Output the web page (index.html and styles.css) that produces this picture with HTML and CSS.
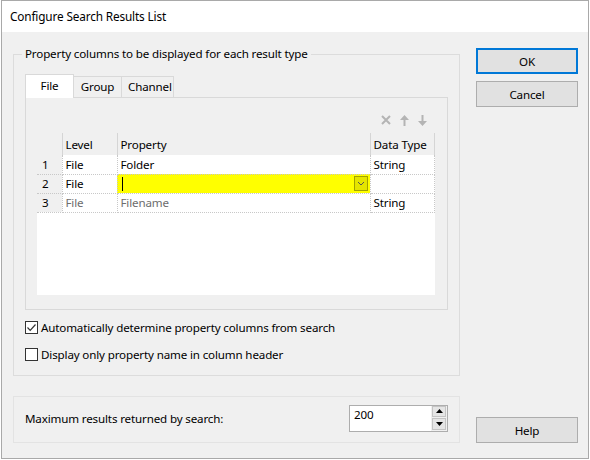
FILE: index.html
```html
<!DOCTYPE html>
<html lang="en">
<head>
  <meta charset="UTF-8">
  <title>Configure Search Results List</title>
  <link rel="stylesheet" href="styles.css">
</head>
<body>
  <div class="window">
    <div class="titlebar">Configure Search Results List</div>
    <div class="content">
      <div class="main">
        <fieldset class="group columns-group">
          <legend>Property columns to be displayed for each result type</legend>
          <div class="tabs">
            <div class="tab active">File</div>
            <div class="tab">Group</div>
            <div class="tab">Channel</div>
          </div>
          <div class="tab-page">
            <div class="grid-tools">
              <svg width="10" height="10" viewBox="0 0 10 10"><path d="M1 1L9 9M9 1L1 9" stroke="#b4b4b4" stroke-width="2"/></svg>
              <svg width="9" height="11" viewBox="0 0 9 11"><path d="M4.5 0L9 5H5.5V11H3.5V5H0Z" fill="#b4b4b4"/></svg>
              <svg width="9" height="11" viewBox="0 0 9 11"><path d="M4.5 11L9 6H5.5V0H3.5V6H0Z" fill="#b4b4b4"/></svg>
            </div>
            <div class="grid">
              <table>
                <colgroup>
                  <col class="c-num"><col class="c-level"><col class="c-prop"><col class="c-type">
                </colgroup>
                <tr>
                  <th></th><th>Level</th><th>Property</th><th>Data Type</th>
                </tr>
                <tr>
                  <td class="num">1</td><td>File</td><td>Folder</td><td>String</td>
                </tr>
                <tr>
                  <td class="num">2</td><td>File</td>
                  <td class="editing">
                    <div class="edit-cell">
                      <span class="caret"></span>
                      <span class="drop">
                        <svg width="8" height="5" viewBox="0 0 8 5"><path d="M1 1L4 4L7 1" fill="none" stroke="#555" stroke-width="1"/></svg>
                      </span>
                    </div>
                  </td>
                  <td></td>
                </tr>
                <tr class="disabled">
                  <td class="num">3</td><td>File</td><td>Filename</td><td class="plain">String</td>
                </tr>
              </table>
            </div>
          </div>
          <label class="check first">
            <span class="box">
              <svg width="11" height="11" viewBox="0 0 11 11"><path d="M1.5 5.5L4.2 8.3L9.5 2.5" fill="none" stroke="#333" stroke-width="1.2"/></svg>
            </span>
            Automatically determine property columns from search
          </label>
          <label class="check">
            <span class="box"></span>
            Display only property name in column header
          </label>
        </fieldset>

        <div class="group limit-group">
          <span>Maximum results returned by search:</span>
          <div class="spin">
            <div class="spin-value">200</div>
            <div class="spin-btns">
              <div class="spin-btn"><svg width="7" height="4" viewBox="0 0 7 4"><path d="M3.5 0L7 4H0Z" fill="#000"/></svg></div>
              <div class="spin-btn"><svg width="7" height="4" viewBox="0 0 7 4"><path d="M0 0H7L3.5 4Z" fill="#000"/></svg></div>
            </div>
          </div>
        </div>
      </div>

      <div class="side">
        <button class="btn default">OK</button>
        <button class="btn cancel">Cancel</button>
        <button class="btn help">Help</button>
      </div>
    </div>
  </div>
</body>
</html>
```

FILE: styles.css
```css
* { box-sizing: border-box; }
body { margin: 0; background: #fff; font-family: "Noto Sans", sans-serif; font-size: 11.6px; letter-spacing: -0.15px; color: #000; }

.window { width: 588px; height: 459px; margin-left: 1px; border: 1px solid #a9a9a9; background: #f0f0f0; display: flex; flex-direction: column; }
.titlebar { height: 31px; line-height: 31px; background: #fff; padding-left: 8px; font-size: 11.8px; }
.content { flex: 1; display: flex; gap: 16px; padding: 14px 10px 16px 11px; }

.main { width: 447px; display: flex; flex-direction: column; }
.group { border: 1px solid #dcdcdc; }
.columns-group { margin: 0; padding: 12px 11px 11px 11px; min-width: 0; }
.columns-group legend { padding: 0 3px; margin-left: -3px; line-height: 16px; }

.tabs { display: flex; align-items: flex-end; height: 23px; }
.tab { height: 21px; line-height: 20px; padding: 0 6px; border: 1px solid #d9d9d9; border-bottom: none; background: #f0f0f0; margin-left: -1px; text-align: center; }
.tab.active { width: 49px; height: 24px; margin-left: 0; margin-bottom: -1px; background: #fff; position: relative; z-index: 1; line-height: 21px; }
.tab:nth-child(2) { width: 49px; }
.tab:nth-child(3) { width: 53px; }

.tab-page { border: 1px solid #d9d9d9; padding: 0 12px 14px 11px; }
.grid-tools { height: 35px; display: flex; justify-content: flex-end; align-items: flex-start; gap: 9px; padding: 17px 8px 0 0; }

.grid { height: 162px; background: #fff; }
.grid table { width: 397px; border-collapse: collapse; table-layout: fixed; }
.c-num { width: 25px; }
.c-level { width: 55px; }
.c-prop { width: 253px; }
.c-type { width: 64px; }
.grid th { height: 22px; background: #f0f0f0; font-weight: normal; text-align: left; padding: 0 3px; border-left: 1px solid #d5d5d5; border-right: 1px solid #d5d5d5; white-space: nowrap; }
.grid th:first-child { border-left: none; }
.grid td { height: 19px; padding: 0 3px; border: 1px dotted #c8c8c8; border-top: none; white-space: nowrap; }
.grid td.num { background: #f0f0f0; padding-left: 5px; border-left: none; }
.grid tr.disabled td { color: #6d6d6d; }
.grid tr.disabled td.num, .grid tr.disabled td.plain { color: #000; }

.grid td.editing { background: #ffff00; padding: 0 2px 0 3px; }
.edit-cell { display: flex; align-items: center; justify-content: space-between; height: 18px; }
.caret { width: 1px; height: 14px; background: #000; margin-left: 1px; }
.drop { width: 14px; height: 15px; border: 1px solid #a3a300; background: #e5e500; display: flex; align-items: center; justify-content: center; }

.check { display: flex; align-items: center; gap: 3px; height: 20px; margin-top: 7px; }
.check.first { margin-top: 7px; }
.box { width: 13px; height: 13px; border: 1px solid #333; background: #fff; display: flex; align-items: center; justify-content: center; }

.limit-group { margin-top: 20px; height: 47px; padding: 7px 11px 10px 11px; display: flex; align-items: center; justify-content: space-between; border-color: #e3e3e3; }
.spin { width: 99px; height: 27px; border: 1px solid #adadad; background: #fff; display: flex; }
.spin-value { flex: 1; padding: 1px 4px; line-height: 16px; }
.spin-btns { width: 16px; background: #f0f0f0; display: flex; flex-direction: column; gap: 1px; padding: 0 1px 1px 1px; }
.spin-btn { flex: 1; background: #e5e5e5; border: 1px solid #c4c4c4; display: flex; align-items: center; justify-content: center; }

.side { width: 102px; display: flex; flex-direction: column; padding-top: 2px; }
.btn { width: 102px; height: 26px; background: #e1e1e1; border: 1px solid #adadad; font: inherit; letter-spacing: inherit; color: #000; padding: 0; }
.btn.default { border-color: #0078d7; box-shadow: inset 0 0 0 1px #0078d7; }
.btn.cancel { margin-top: 7px; }
.btn.help { margin-top: auto; }
```
